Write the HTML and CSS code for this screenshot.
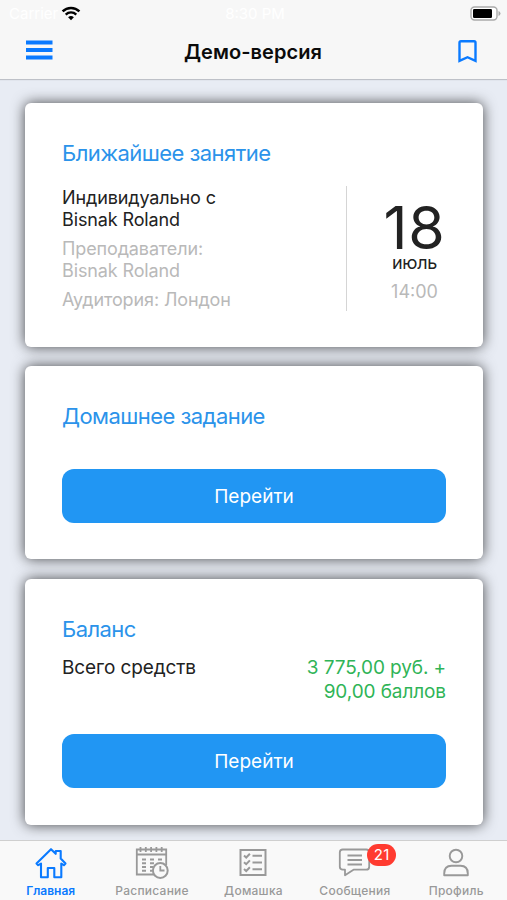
FILE: index.html
```html
<!DOCTYPE html>
<html lang="ru">
<head>
    <meta charset="UTF-8">
    <meta name="viewport" content="width=device-width, initial-scale=1.0">
    <title>Демо-версия</title>
    <link rel="stylesheet" href="styles.css">
</head>
<body>
    <header class="header">
        <div class="status-bar">
            <div class="carrier">
                <span>Carrier</span>
                <svg width="20" height="15" viewBox="0 0 20 15">
                    <path d="M1.6 5.4a12 12 0 0 1 16.8 0" fill="none" stroke="#000" stroke-width="2.5"/>
                    <path d="M4.7 8.6a7.6 7.6 0 0 1 10.6 0" fill="none" stroke="#000" stroke-width="2.3"/>
                    <path d="M10 14.3l-2.9-3a4.2 4.2 0 0 1 5.8 0z" fill="#000"/>
                </svg>
            </div>
            <span class="time">8:30 PM</span>
            <svg class="battery" width="31" height="15" viewBox="0 0 31 15">
                <rect x="1" y="1" width="26" height="13" rx="3.5" fill="#fff" stroke="#aaa" stroke-width="1.4"/>
                <rect x="3" y="3" width="19" height="9" rx="1.2" fill="#000"/>
                <path d="M28.5 5v5q2-.8 2-2.5t-2-2.5z" fill="#aaa"/>
            </svg>
        </div>
        <div class="nav-bar">
            <button class="nav-button menu" aria-label="Меню">
                <svg width="27" height="20" viewBox="0 0 27 20" fill="#0a7aff">
                    <rect y="0.5" width="26.5" height="4"/>
                    <rect y="8" width="26.5" height="4"/>
                    <rect y="15.5" width="26.5" height="4"/>
                </svg>
            </button>
            <h1>Демо-версия</h1>
            <button class="nav-button bookmark" aria-label="Закладки">
                <svg width="19" height="23" viewBox="0 0 19 23">
                    <path d="M1.5 20.8V2.7q0-1.4 1.4-1.4h13.2q1.4 0 1.4 1.4v18.1l-8-3.6z" fill="none" stroke="#0a7aff" stroke-width="2.4"/>
                </svg>
            </button>
        </div>
    </header>

    <main class="content">
        <section class="card card-lesson">
            <h2>Ближайшее занятие</h2>
            <div class="lesson">
                <div class="lesson-info">
                    <p class="lesson-name">Индивидуально с<br>Bisnak Roland</p>
                    <p>Преподаватели:<br>Bisnak Roland</p>
                    <p>Аудитория: Лондон</p>
                </div>
                <div class="lesson-date">
                    <span class="day">18</span>
                    <span class="month">июль</span>
                    <span class="hour">14:00</span>
                </div>
            </div>
        </section>

        <section class="card card-homework">
            <h2>Домашнее задание</h2>
            <button class="button">Перейти</button>
        </section>

        <section class="card card-balance">
            <h2>Баланс</h2>
            <div class="balance">
                <span>Всего средств</span>
                <span class="amount">3 775,00 руб. +<br>90,00 баллов</span>
            </div>
            <button class="button">Перейти</button>
        </section>
    </main>

    <nav class="tab-bar">
        <a class="tab active">
            <svg width="34" height="34" viewBox="0 0 34 34">
                <path d="M2.5 17.5L17 3.2l4.7 4.6V5h5v7.5l4.8 5-1.6 1.7-2.6-1.6v13.6h-7V22h-6.5v9.2H7V17.6l-2.8 1.6z" fill="none" stroke="currentColor" stroke-width="2.1" stroke-linejoin="round"/>
            </svg>
            <span>Главная</span>
        </a>
        <a class="tab">
            <svg width="34" height="34" viewBox="0 0 34 34" fill="none" stroke="currentColor">
                <path d="M19 28.5H1.8v-25h29.4V19M1.8 8.5h29.4" stroke-width="1.8"/>
                <path d="M5.5 1v5M10.8 1v5M16.1 1v5M21.4 1v5M26.7 1v5" stroke-width="1.8"/>
                <path d="M7 13.5h4M15 13.5h4M23 13.5h4M7 17.3h4M15 17.3h4M7 21h4M15 21h3M7 24.7h4M15 24.7h2" stroke-width="1.9"/>
                <circle cx="25.3" cy="24.5" r="7.4" stroke-width="2"/>
                <path d="M25.3 20v4.5h4.2" stroke-width="1.8"/>
            </svg>
            <span>Расписание</span>
        </a>
        <a class="tab">
            <svg width="34" height="34" viewBox="0 0 34 34" fill="none" stroke="currentColor">
                <rect x="4.5" y="4" width="25" height="25" stroke-width="2"/>
                <path d="M16.5 9.8H26M16.5 16.5H26M16.5 23.3H26" stroke-width="2"/>
                <path d="M8 9.5l2.2 2 3.7-3.8M8 16.2l2.2 2 3.7-3.8M8 23l2.2 2 3.7-3.8" stroke-width="2"/>
            </svg>
            <span>Домашка</span>
        </a>
        <a class="tab">
            <svg width="34" height="34" viewBox="0 0 34 34" fill="none" stroke="currentColor">
                <path d="M4.8 3.5h23.4q3 0 3 3v14.2q0 3-3 3H15.5L7 29.2v-5.5H4.8q-3 0-3-3V6.5q0-3 3-3z" stroke-width="1.8" stroke-linejoin="round"/>
                <path d="M9.500 9.500H24M9.500 14H24M9.500 18.500H24" stroke-width="1.8"/>
            </svg>
            <span class="badge">21</span>
            <span>Сообщения</span>
        </a>
        <a class="tab">
            <svg width="34" height="34" viewBox="0 0 34 34" fill="none" stroke="currentColor">
                <circle cx="17" cy="10" r="6.3" stroke-width="1.9"/>
                <path d="M5.2 29.2v-1.8q0-7.6 7.3-7.6h9q7.3 0 7.3 7.6v1.8z" stroke-width="1.9" stroke-linejoin="round"/>
            </svg>
            <span>Профиль</span>
        </a>
    </nav>
</body>
</html>
```
FILE: styles.css
```css
* {
    box-sizing: border-box;
}
body {
    display: flex;
    flex-direction: column;
    height: 900px;
    margin: 0;
    overflow: hidden;
    background: #e8ecf4;
    color: #222;
    font-family: Inter, Roboto, "Liberation Sans", sans-serif;
}
h1, h2, p {
    margin: 0;
}
svg {
    display: block;
}
button {
    padding: 0;
    border: none;
    font-family: inherit;
}
.header {
    flex: none;
    height: 79px;
    background: #f7f7f7;
    box-shadow: 0 1px 1px rgba(0, 0, 0, 0.18);
}
.status-bar {
    display: grid;
    grid-template-columns: 1fr auto 1fr;
    align-items: center;
    height: 27px;
    padding: 0 6px 0 9px;
    color: #fff;
    font-size: 15px;
}
.carrier {
    display: flex;
    align-items: center;
    gap: 3px;
}
.battery {
    justify-self: end;
}
.nav-bar {
    display: grid;
    grid-template-columns: 40px 1fr 40px;
    align-items: center;
    height: 49px;
    padding: 0 30px 0 26px;
}
.nav-bar h1 {
    padding: 1px 0 0 3px;
    color: #0b0b0b;
    font-size: 20px;
    font-weight: 600;
    letter-spacing: 0.05px;
    text-align: center;
}
.nav-button {
    background: none;
}
.menu {
    padding-bottom: 3px;
}
.bookmark {
    justify-self: end;
}
.content {
    flex: 1;
    padding: 24px 24px 0 25px;
}
.card {
    padding: 36px 37px 0;
    border-radius: 6px;
    background: #fff;
    box-shadow: 0 0 14px rgba(0, 0, 0, 0.7);
}
.card h2 {
    color: #2b93ea;
    font-size: 22px;
    font-weight: 400;
    letter-spacing: -0.55px;
    line-height: 29px;
}
.card-lesson {
    height: 244px;
}
.card-homework {
    height: 193px;
    margin-top: 19px;
}
.card-balance {
    height: 246px;
    margin-top: 20px;
}
.lesson {
    display: flex;
    justify-content: space-between;
    height: 125px;
    margin-top: 18px;
}
.lesson-info {
    padding-top: 1px;
    color: #b9b9b9;
    font-size: 18px;
    letter-spacing: -0.12px;
    line-height: 21.5px;
}
.lesson-info p {
    margin-bottom: 8px;
}
.lesson-info .lesson-name {
    color: #222;
}
.lesson-date {
    display: flex;
    flex-direction: column;
    align-items: center;
    width: 100px;
    padding-left: 36px;
    border-left: 1px solid #d5d5d5;
    white-space: nowrap;
}
.day {
    margin-top: 17px;
    font-size: 59px;
    letter-spacing: 0.8px;
    line-height: 50px;
}
.month {
    margin-top: -1px;
    font-size: 18px;
    letter-spacing: -0.3px;
    line-height: 22px;
}
.hour {
    margin-top: 7px;
    color: #b9b9b9;
    font-size: 18px;
    line-height: 22px;
}
.button {
    display: block;
    width: 384px;
    height: 54px;
    border-radius: 12px;
    background: #2196f3;
    color: #fff;
    font-size: 19px;
}
.card-homework .button {
    margin-top: 38px;
}
.balance {
    display: flex;
    justify-content: space-between;
    margin-top: 12px;
    font-size: 19px;
    letter-spacing: -0.1px;
    line-height: 23.5px;
}
.amount {
    color: #2fb457;
    text-align: right;
}
.card-balance .button {
    margin-top: 31px;
}
.tab-bar {
    flex: none;
    display: grid;
    grid-template-columns: repeat(5, 1fr);
    height: 60px;
    border-top: 1px solid #cfcfcf;
    background: #f9f9f9;
    z-index: 1;
}
.tab {
    position: relative;
    display: flex;
    flex-direction: column;
    align-items: center;
    padding-top: 5px;
    color: #999;
    font-size: 12px;
    font-weight: 500;
    letter-spacing: 0.25px;
    line-height: 16px;
}
.tab svg {
    margin-bottom: 3px;
}
.tab.active {
    color: #0a7aff;
    font-weight: 600;
    letter-spacing: 0;
}
.badge {
    position: absolute;
    top: 3px;
    left: 63px;
    width: 29px;
    height: 22px;
    border-radius: 11px;
    background: #ff3b30;
    color: #fff;
    font-size: 15px;
    font-weight: 400;
    line-height: 22px;
    text-align: center;
}
```
